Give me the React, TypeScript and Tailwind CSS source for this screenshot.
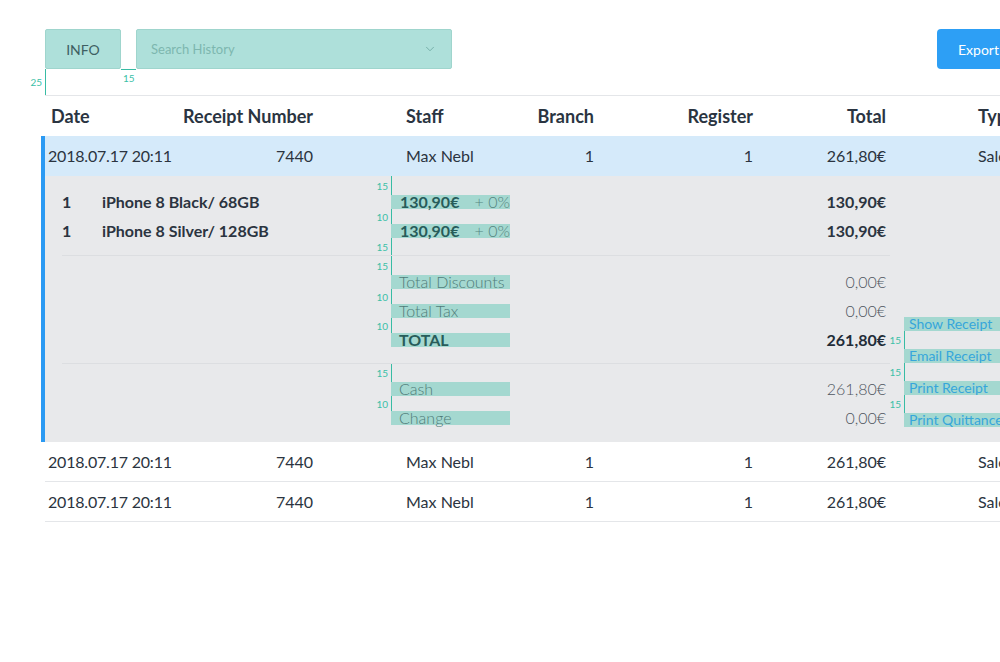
import React from "react";
import { ChevronDown } from "lucide-react";

const ROW_GRID = "grid grid-cols-[155px_113px_187px_94px_159px_133px_124px] items-center";

function VLine({ h, label, ml }: { h: string; label?: string; ml: string }) {
  return (
    <div className={`relative self-start w-0 border-l border-[#38bca4] ${h} ${ml}`}>
      {label && (
        <span className="absolute right-[4px] top-1/2 -translate-y-1/2 text-[10px] leading-none text-[#3bbfa7]">
          {label}
        </span>
      )}
    </div>
  );
}

function DataRow({ selected }: { selected?: boolean }) {
  return (
    <div
      className={`${ROW_GRID} h-[40px] text-[16px] text-[#2b3440] ${
        selected ? "bg-[#d5eafa]" : "border-b border-[#e4e6e9]"
      }`}
    >
      <div className="pl-[3px] whitespace-nowrap tracking-[-0.2px]">2018.07.17 20:11</div>
      <div className="text-right">7440</div>
      <div className="pl-[93px] whitespace-nowrap">Max Nebl</div>
      <div className="text-right">1</div>
      <div className="text-right">1</div>
      <div className="text-right">261,80€</div>
      <div className="pl-[92px]">Sale</div>
    </div>
  );
}

function ItemRow({ name }: { name: string }) {
  return (
    <div className="flex items-center h-[14px] leading-[14px] text-[16px]">
      <div className="w-[40px] font-bold text-[#2b3440]">1</div>
      <div className="w-[289px] font-bold text-[#2b3440] whitespace-nowrap">{name}</div>
      <div className="w-[119px] h-[14px] bg-[#a4d8d0] flex items-center justify-between pl-[9px]">
        <span className="font-bold text-[#285c5a]">130,90€</span>
        <span className="font-light text-[#55857f]">+ 0%</span>
      </div>
      <div className="flex-1 text-right pr-[4px] font-bold text-[#2b3440]">130,90€</div>
    </div>
  );
}

function SumRow({ label, value, bold }: { label: string; value: string; bold?: boolean }) {
  return (
    <div className="flex items-center h-[14px] leading-[14px] text-[16px]">
      <div
        className={`ml-[329px] w-[119px] h-[14px] bg-[#a4d8d0] pl-[8px] whitespace-nowrap ${
          bold ? "font-bold text-[#285c5a]" : "font-light text-[#507c79]"
        }`}
      >
        {label}
      </div>
      <div
        className={`flex-1 text-right pr-[4px] ${
          bold ? "font-bold text-[#222c38]" : "font-light text-[#4f5660]"
        }`}
      >
        {value}
      </div>
    </div>
  );
}

function Action({ label }: { label: string }) {
  return (
    <div className="h-[14px] leading-[14px] bg-[#a4d8d0] pl-[5px] text-[14px] text-[#36a6db] whitespace-nowrap">
      {label}
    </div>
  );
}

export default function App() {
  return (
    <div className="w-[1000px] h-[662px] overflow-hidden bg-white font-['Lato',sans-serif]">
      <div className="w-[1060px] flex flex-col">
        {/* top bar */}
        <div className="flex items-start pl-[45px] pt-[29px]">
          <div className="w-[76px] h-[40px] rounded-[2px] bg-[#aee0da] border border-[#9fd5cd] flex items-center justify-center text-[14px] text-[#3e5f62]">
            INFO
          </div>
          <div className="relative w-[15px] h-[40px]">
            <div className="absolute left-0 right-0 top-full h-px bg-[#38bca4]" />
            <span className="absolute top-full mt-[4px] left-[2px] text-[10px] leading-none text-[#3bbfa7]">15</span>
          </div>
          <div className="w-[316px] h-[40px] rounded-[2px] bg-[#aee0da] border border-[#9fd5cd] flex items-center justify-between pl-[14px] pr-[14px]">
            <span className="text-[13px] leading-[13px] pt-[1px] text-[#7db7af]">Search History</span>
            <ChevronDown size={14} strokeWidth={1.2} className="text-[#5f9c95]" />
          </div>
          <div className="ml-[485px] w-[100px] h-[40px] rounded-[4px] bg-[#2d9ff5] flex items-center pl-[21px] text-[14px] text-white">
            Export
          </div>
        </div>
        <VLine h="h-[26px]" ml="ml-[45px]" label="25" />

        {/* table */}
        <div className="ml-[45px] border-t border-[#e4e6e9]">
          <div className={`${ROW_GRID} h-[40px] text-[18px] font-bold text-[#2a3441]`}>
            <div className="pl-[6px]">Date</div>
            <div className="flex justify-end whitespace-nowrap">Receipt Number</div>
            <div className="pl-[93px]">Staff</div>
            <div className="text-right">Branch</div>
            <div className="text-right">Register</div>
            <div className="text-right">Total</div>
            <div className="pl-[92px]">Type</div>
          </div>

          <div className="-ml-[4px] border-l-4 border-[#2b9af3]">
            <DataRow selected />
            <div className="flex bg-[#e8e9eb] h-[266px]">
              <div className="w-[845px] pl-[17px] flex flex-col">
                <div className="flex flex-col">
                  <VLine h="h-[19px]" ml="ml-[329px]" label="15" />
                  <ItemRow name="iPhone 8 Black/ 68GB" />
                  <VLine h="h-[15px]" ml="ml-[329px]" label="10" />
                  <ItemRow name="iPhone 8 Silver/ 128GB" />
                  <VLine h="h-[17px]" ml="ml-[329px]" label="15" />
                </div>
                <div className="flex flex-col border-t border-[#dcdee1] pb-[16px]">
                  <VLine h="h-[19px]" ml="ml-[329px]" label="15" />
                  <SumRow label="Total Discounts" value="0,00€" />
                  <VLine h="h-[15px]" ml="ml-[329px]" label="10" />
                  <SumRow label="Total Tax" value="0,00€" />
                  <VLine h="h-[15px]" ml="ml-[329px]" label="10" />
                  <SumRow label="TOTAL" value="261,80€" bold />
                </div>
                <div className="flex flex-col border-t border-[#dcdee1]">
                  <VLine h="h-[18px]" ml="ml-[329px]" label="15" />
                  <SumRow label="Cash" value="261,80€" />
                  <VLine h="h-[15px]" ml="ml-[329px]" label="10" />
                  <SumRow label="Change" value="0,00€" />
                </div>
              </div>
              <div className="ml-[14px] w-[130px] flex flex-col justify-end pb-[15px]">
                <Action label="Show Receipt" />
                <VLine h="h-[18px]" ml="ml-0" label="15" />
                <Action label="Email Receipt" />
                <VLine h="h-[18px]" ml="ml-0" label="15" />
                <Action label="Print Receipt" />
                <VLine h="h-[18px]" ml="ml-0" label="15" />
                <Action label="Print Quittance" />
              </div>
            </div>
          </div>

          <DataRow />
          <DataRow />
        </div>
      </div>
    </div>
  );
}
